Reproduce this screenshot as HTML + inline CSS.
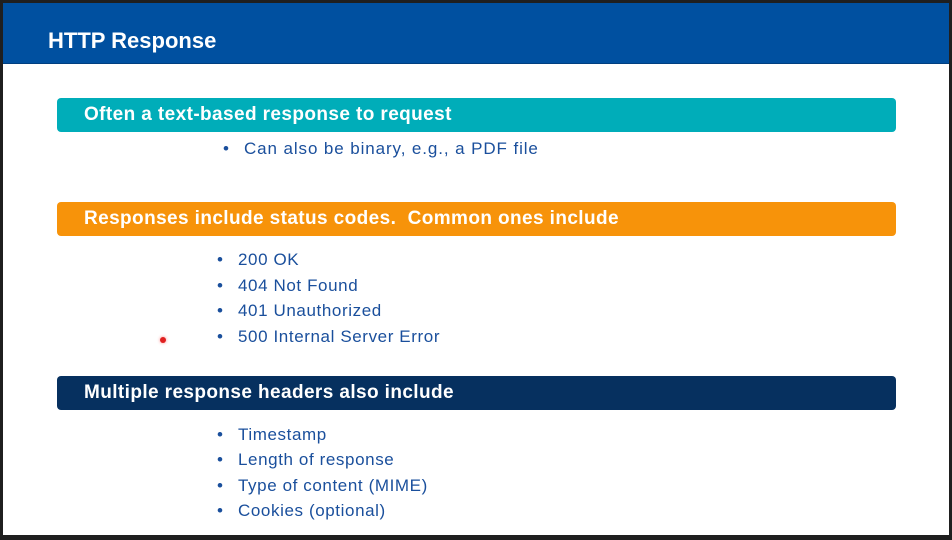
<!DOCTYPE html>
<html><head><style>
body{margin:0;width:952px;height:540px;background:#1f1f1f;position:relative;overflow:hidden;font-family:"Liberation Sans",sans-serif}
.slide{position:absolute;left:3px;top:3px;width:946px;height:532px;background:#fff}
.hdr{position:absolute;left:0;top:0;width:946px;height:60px;background:#0050a0;border-bottom:1px solid #003f80}
.hdr span{position:absolute;left:45px;top:25px;color:#fff;font-weight:bold;font-size:22px}
.box{position:absolute;left:54px;width:839px;height:34px;border-radius:4px;color:#fff;font-weight:bold;font-size:19px;line-height:34px;letter-spacing:0.4px}
.box span{position:absolute;left:27px}
.b{position:absolute;color:#1a4f9c;font-size:17px;line-height:20px;letter-spacing:0.6px}
.b i{font-style:normal;position:absolute;left:-21px}
</style></head><body><div class="slide">
<div class="hdr"><span>HTTP Response</span></div>
<div class="box" style="top:95px;background:#00adb9"><span>Often a text-based response to request</span></div>
<div class="b" style="left:241px;top:136px;letter-spacing:0.9px"><i>•</i>Can also be binary, e.g., a PDF file</div>
<div class="box" style="top:199px;background:#f7930a"><span>Responses include status codes.&nbsp; Common ones include</span></div>
<div class="b" style="left:235px;top:247px"><i>•</i>200 OK</div>
<div class="b" style="left:235px;top:273px"><i>•</i>404 Not Found</div>
<div class="b" style="left:235px;top:298px"><i>•</i>401 Unauthorized</div>
<div class="b" style="left:235px;top:324px"><i>•</i>500 Internal Server Error</div>
<div style="position:absolute;left:157px;top:334px;width:6px;height:6px;border-radius:50%;background:#e02020;box-shadow:0 0 3px #f88"></div>
<div class="box" style="top:373px;background:#06305f"><span>Multiple response headers also include</span></div>
<div class="b" style="left:235px;top:422px"><i>•</i>Timestamp</div>
<div class="b" style="left:235px;top:447px"><i>•</i>Length of response</div>
<div class="b" style="left:235px;top:473px"><i>•</i>Type of content (MIME)</div>
<div class="b" style="left:235px;top:498px"><i>•</i>Cookies (optional)</div>
</div></body></html>
